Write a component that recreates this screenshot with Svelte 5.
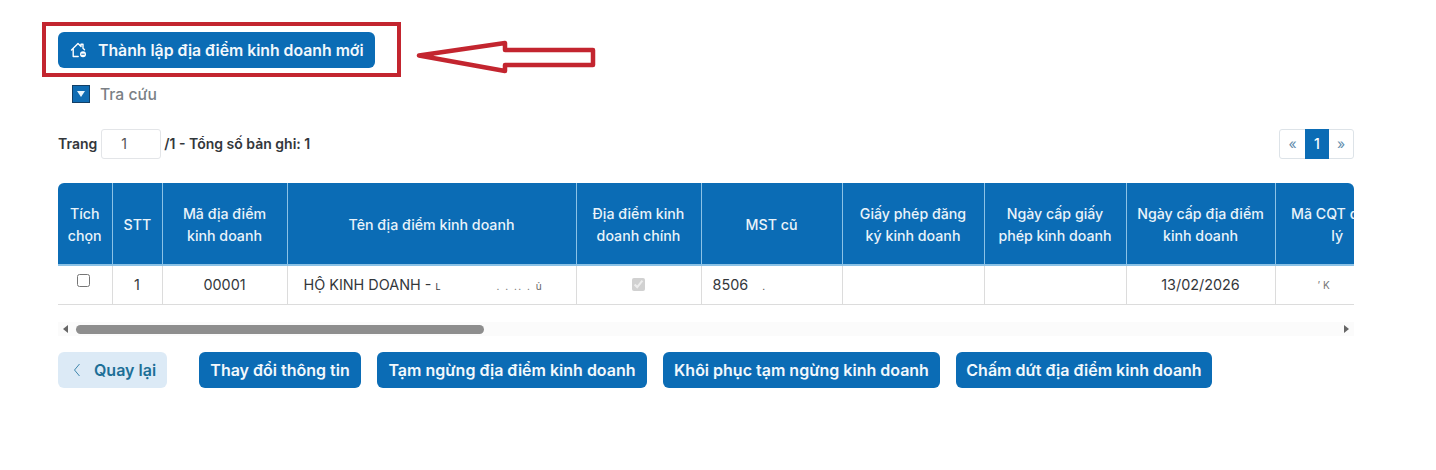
<script>
  const columns = [
    { label: 'Tích chọn', width: 54 },
    { label: 'STT', width: 50 },
    { label: 'Mã địa điểm kinh doanh', width: 125 },
    { label: 'Tên địa điểm kinh doanh', width: 289 },
    { label: 'Địa điểm kinh doanh chính', width: 125 },
    { label: 'MST cũ', width: 141 },
    { label: 'Giấy phép đăng ký kinh doanh', width: 142 },
    { label: 'Ngày cấp giấy phép kinh doanh', width: 142 },
    { label: 'Ngày cấp địa điểm kinh doanh', width: 149 },
    { label: 'Mã CQT quản lý', width: 124 }
  ];
  const actions = [
    { label: 'Thay đổi thông tin', width: 162 },
    { label: 'Tạm ngừng địa điểm kinh doanh', width: 270 },
    { label: 'Khôi phục tạm ngừng kinh doanh', width: 277 },
    { label: 'Chấm dứt địa điểm kinh doanh', width: 256 }
  ];
</script>

<main class="page">
  <div class="top">
    <div class="highlight">
      <button class="btn primary create">
        <svg width="18" height="18" viewBox="0 0 18 18" fill="none" stroke="#fff" stroke-width="1.4" stroke-linecap="round" stroke-linejoin="round">
          <path d="M1.500 9 8 2.500l3 2.900V3.200h2v4.100l1.500 1.500M3.200 7.800V15.500h5" />
          <circle cx="13" cy="13.200" r="3" fill="#fff" stroke="none" />
          <path d="M11.700 13.200h2.600" stroke="#0b6cb5" stroke-width="1" />
        </svg>
        Thành lập địa điểm kinh doanh mới
      </button>
    </div>
    <svg class="arrow" width="182" height="36" viewBox="0 0 182 36" fill="none">
      <path d="M4 15.500 90 3v7h88v15H90v6Z" stroke="#c3252f" stroke-width="4.500" stroke-linejoin="round" />
    </svg>
  </div>

  <div class="search">
    <span class="toggle"><i></i></span>
    <span>Tra cứu</span>
  </div>

  <div class="pager-row">
    <div class="page-info">
      <span>Trang</span>
      <span class="page-input">1</span>
      <span>/1 - Tổng số bản ghi: 1</span>
    </div>
    <div class="pager">
      <span>«</span>
      <span class="active">1</span>
      <span>»</span>
    </div>
  </div>

  <div class="table-wrap">
    <table>
      <colgroup>
        {#each columns as col}
          <col style="width: {col.width}px" />
        {/each}
      </colgroup>
      <thead>
        <tr>
          {#each columns as col}
            <th>{col.label}</th>
          {/each}
        </tr>
      </thead>
      <tbody>
        <tr>
          <td class="center"><input class="check" type="checkbox" /></td>
          <td class="center">1</td>
          <td class="center">00001</td>
          <td class="name">HỘ KINH DOANH - <span class="redacted">L</span><span class="specks">. . .. . ủ</span></td>
          <td class="center"><input class="check-disabled" type="checkbox" checked disabled /></td>
          <td class="mst">8506 <span class="speck">.</span></td>
          <td></td>
          <td></td>
          <td class="center">13/02/2026</td>
          <td class="faded"><span>’ K</span></td>
        </tr>
      </tbody>
    </table>
  </div>

  <div class="scrollbar">
    <span class="tri left"></span>
    <div class="track"><div class="thumb"></div></div>
    <span class="tri right"></span>
  </div>

  <div class="actions">
    <button class="btn back">
      <svg class="chev" width="8" height="14" viewBox="0 0 8 14" fill="none" stroke="#3f86ad" stroke-width="1">
        <path d="M6.500 1 1.500 7l5 6" />
      </svg>
      Quay lại
    </button>
    {#each actions as action}
      <button class="btn primary" style="width: {action.width}px">{action.label}</button>
    {/each}
  </div>
</main>

<style>
  :global(body) {
    margin: 0;
    background: #fff;
    font-family: Inter, "Noto Sans", sans-serif;
    color: #2b2f33;
  }
  .page {
    box-sizing: border-box;
    padding: 22px 0 0 58px;
    width: 1354px;
    height: 470px;
    overflow: hidden;
  }
  .top {
    display: flex;
    margin-left: -16px;
    gap: 14px;
  }
  .highlight {
    box-sizing: border-box;
    width: 359px;
    height: 55px;
    border: 4px solid #c3252f;
    padding: 6px 0 0 12px;
  }
  .arrow {
    margin-top: 18px;
  }
  .btn {
    border: 0;
    height: 36px;
    border-radius: 6px;
    font: 600 16px Inter, "Noto Sans", sans-serif;
    padding: 0;
    white-space: nowrap;
  }
  .primary {
    background: #0b6cb5;
    color: #f2f8fc;
  }
  .create {
    display: flex;
    align-items: center;
    gap: 10px;
    width: 317px;
    padding-left: 12px;
    font-size: 15.800px;
  }
  .search {
    display: flex;
    align-items: center;
    gap: 10px;
    margin: 8px 0 0 14px;
    height: 18px;
    color: #7a7f85;
    font-size: 15.700px;
    font-weight: 500;
  }
  .toggle {
    box-sizing: border-box;
    width: 18px;
    height: 18px;
    background: #0f6cb3;
    border: 1px solid #123f66;
    display: flex;
    align-items: center;
    justify-content: center;
  }
  .toggle i {
    width: 0;
    height: 0;
    border-left: 4px solid transparent;
    border-right: 4px solid transparent;
    border-top: 6px solid #e8f5fd;
  }
  .pager-row {
    display: flex;
    justify-content: space-between;
    align-items: center;
    margin-top: 25px;
    height: 31px;
  }
  .page-info {
    display: flex;
    align-items: center;
    gap: 3px;
    font-size: 14px;
    font-weight: 600;
    color: #33373b;
  }
  .page-input {
    box-sizing: border-box;
    width: 60px;
    height: 30px;
    margin-left: 1px;
    border: 1px solid #e3e5e8;
    border-radius: 3px;
    padding-left: 19px;
    line-height: 28px;
    font-size: 14px;
    font-weight: 400;
    color: #555;
  }
  .pager {
    display: flex;
    height: 30px;
    box-sizing: border-box;
    border: 1px solid #dde3e8;
    border-radius: 3px;
    font-size: 14px;
    color: #5f8cac;
  }
  .pager span {
    width: 25px;
    display: flex;
    align-items: center;
    justify-content: center;
  }
  .pager .active {
    width: 24px;
    height: 30px;
    margin-top: -1px;
    background: #0b6cb5;
    color: #fff;
    font-weight: 500;
  }
  .pager span:first-child {
    width: 25px;
  }
  .pager span:last-child {
    width: 24px;
  }
  .table-wrap {
    margin-top: 24px;
    height: 122px;
    width: 1296px;
    overflow: hidden;
    border-radius: 6px 6px 0 0;
  }
  table {
    table-layout: fixed;
    width: 1341px;
    border-collapse: collapse;
    font-size: 14.400px;
  }
  th {
    height: 82px;
    box-sizing: border-box;
    background: #0b6cb5;
    color: #e9f3fa;
    font-weight: 500;
    font-size: 14.200px;
    line-height: 22px;
    padding: 2px 11px 0;
    border-left: 1px solid #8cc2e6;
    border-bottom: 2px solid #8cc2e6;
  }
  th:first-child,
  td:first-child {
    border-left: 0;
  }
  th:first-child {
    padding: 2px 6px 0;
  }
  th:nth-child(9) {
    padding: 2px 4px 0;
  }
  td {
    height: 39px;
    box-sizing: border-box;
    padding: 0;
    border-left: 1px solid #dcdcdc;
    border-bottom: 1px solid #dcdcdc;
    color: #33373b;
    white-space: nowrap;
    overflow: hidden;
  }
  .center {
    text-align: center;
  }
  .name {
    padding-left: 16px;
  }
  .mst {
    padding-left: 11px;
  }
  .speck {
    margin-left: 10px;
    font-size: 10px;
  }
  .redacted {
    font-size: 9px;
  }
  .specks {
    margin-left: 56px;
    font-size: 10px;
    color: #666;
    letter-spacing: 1.500px;
  }
  .faded {
    padding-left: 42px;
    font-size: 10px;
    color: #777;
  }
  .check {
    width: 13px;
    height: 13px;
    margin: 0 2px 9px 0;
    vertical-align: middle;
  }
  .check-disabled {
    width: 13px;
    height: 13px;
    margin: 0 0 3px;
    vertical-align: middle;
  }
  .scrollbar {
    display: flex;
    align-items: center;
    width: 1296px;
    height: 14px;
    margin-top: 17px;
    background: #fbfbfb;
    box-sizing: border-box;
    padding: 0 5px;
  }
  .track {
    flex: 1;
    padding: 0 8px;
  }
  .thumb {
    width: 408px;
    height: 9px;
    border-radius: 5px;
    background: #8e8e8e;
  }
  .tri {
    width: 0;
    height: 0;
    border-top: 4px solid transparent;
    border-bottom: 4px solid transparent;
  }
  .tri.left {
    border-right: 5px solid #666;
  }
  .tri.right {
    border-left: 5px solid #666;
  }
  .actions {
    display: flex;
    margin-top: 16px;
    gap: 16px;
  }
  .back {
    width: 109px;
    margin-right: 16px;
    padding-left: 15px;
    background: #dceaf6;
    color: #1d6f97;
    display: flex;
    align-items: center;
    gap: 13px;
  }
</style>
